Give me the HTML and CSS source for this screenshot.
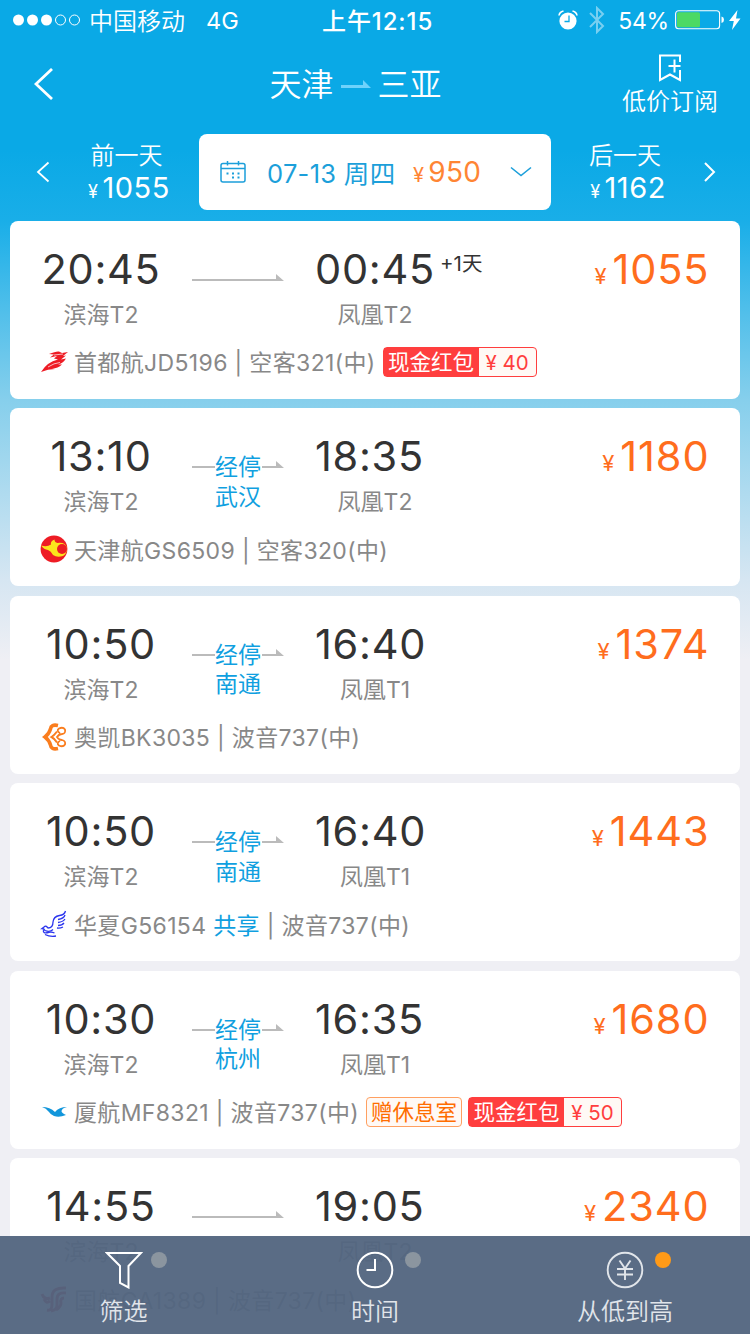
FILE: index.html
```html
<!DOCTYPE html>
<html lang="zh-CN">
<head>
    <meta charset="UTF-8">
    <meta name="viewport" content="width=device-width, initial-scale=1.0">
    <title>天津 - 三亚</title>
    <link rel="stylesheet" href="styles.css">
</head>
<body>

<svg width="0" height="0" class="defs">
    <symbol id="arrow" viewBox="0 0 92 8"><path d="M0 5h84V0l8 7H0z"/></symbol>
    <symbol id="arrow-stop" viewBox="0 0 92 8"><path d="M0 5h23v2H0zM70 5h14V0l8 7H70z"/></symbol>
</svg>

<div class="screen">
    <div class="status">
        <svg class="signal" width="68" height="12" viewBox="0 0 68 12">
            <g fill="#fff"><circle cx="5.5" cy="6" r="5.5"/><circle cx="19.5" cy="6" r="5.5"/><circle cx="33.5" cy="6" r="5.5"/></g>
            <g fill="none" stroke="#fff"><circle cx="47.5" cy="6" r="5"/><circle cx="61.5" cy="6" r="5"/></g>
        </svg>
        <span class="carrier">中国移动</span>
        <span class="network">4G</span>
        <span class="clock">上午12:15</span>
        <div class="status-right">
            <svg width="20" height="20" viewBox="0 0 20 20">
                <circle cx="10" cy="11" r="8.6" fill="#fff"/>
                <path d="M1 5.5Q1.5 2 5.5 1M19 5.500Q18.500 2 14.500 1" fill="none" stroke="#fff" stroke-width="1.6"/>
                <path d="M11 5.500v6H6.500" fill="none" stroke="#0aa9e6" stroke-width="1.3"/>
            </svg>
            <svg class="bluetooth" width="16" height="28" viewBox="0 0 16 28">
                <path d="M1 7l13 13-6 6V2l6 6L1 21" fill="none" stroke="#fff" stroke-width="2"/>
            </svg>
            <span class="percent">54%</span>
            <svg class="battery" width="50" height="20" viewBox="0 0 50 20">
                <rect x=".6" y=".8" width="44" height="18" rx="3" fill="none" stroke="#fff" stroke-width="1.1"/>
                <rect x="2" y="2.300" width="23" height="15" rx="1.500" fill="#4cd964"/>
                <path d="M46.500 6.500q2.500.5 2.500 3.300t-2.500 3.300z" fill="#fff"/>
            </svg>
            <svg width="12" height="20" viewBox="0 0 12 20"><path d="M8.500 0L0 11h4.800L3 20l8.500-11.500H7z" fill="#fff"/></svg>
        </div>
    </div>

    <div class="navbar">
        <svg class="back" width="20" height="32" viewBox="0 0 20 32"><path d="M18 1L2 16l16 15" fill="none" stroke="#fff" stroke-width="2.800"/></svg>
        <div class="route">
            <span>天津</span>
            <svg width="30" height="8" viewBox="0 0 30 8"><path d="M0 5h22V0l8 8H0z" fill="#6fd2fb"/></svg>
            <span>三亚</span>
        </div>
        <div class="subscribe">
            <svg width="24" height="28" viewBox="0 0 24 28" fill="none" stroke="#fff" stroke-width="2">
                <path d="M22 8V1.500H2V26l10-5.500L22 26V16M16.500 5.500v13M10.500 12h12"/>
            </svg>
            <span>低价订阅</span>
        </div>
    </div>

    <div class="days">
        <svg class="prev-arrow" width="14" height="22" viewBox="0 0 14 22"><path d="M12.500 1.500L2 11l10.500 9.500" fill="none" stroke="#fff" stroke-width="1.800"/></svg>
        <div class="day prev">
            <span>前一天</span>
            <span class="day-price"><i>¥</i>1055</span>
        </div>
        <div class="today">
            <svg class="calendar" width="26" height="22" viewBox="0 0 26 22" fill="none" stroke="#1c9fda" stroke-width="1.500">
                <rect x="1" y="2.500" width="24" height="18.500" rx="2"/>
                <path d="M1 7.500h24M7.500 0v4.500M18.500 0v4.500"/>
                <path d="M6.500 12.500h2M12 12.500h2M17.500 12.500h2M12 16.500h2M17.500 16.500h2" stroke-width="2"/>
            </svg>
            <span class="date">07-13 周四</span>
            <span class="low"><i>¥</i>950</span>
            <svg class="down" width="22" height="12" viewBox="0 0 22 12"><path d="M1 1.500l10 8 10-8" fill="none" stroke="#1c9fda" stroke-width="1.600"/></svg>
        </div>
        <div class="day next">
            <span>后一天</span>
            <span class="day-price"><i>¥</i>1162</span>
        </div>
        <svg class="next-arrow" width="14" height="22" viewBox="0 0 14 22"><path d="M2 2l9 9-9 9" fill="none" stroke="#fff" stroke-width="2"/></svg>
    </div>

    <div class="list">
        <div class="card">
            <div class="times">
                <div class="depart"><b>20:45</b><span>滨海T2</span></div>
                <div class="via"><svg width="92" height="8"><use href="#arrow"/></svg></div>
                <div class="arrive"><b>00:45</b><span>凤凰T2</span></div>
                <sup>+1天</sup>
                <div class="price"><i>¥</i>1055</div>
            </div>
            <div class="info">
                <svg class="logo" width="28" height="24" viewBox="0 0 28 24" fill="#ee1c25">
                    <path d="M1 22Q7 12 18 9.500l-4-1 3-2.500-7 1.500 4-3-5-.5Q16 1 19 1.500l3 1.500 6-1-5 4 3-.5-5 4 5-1q-3 5-8 6l4 0q-4 4-10 4l3 .5Q8 19 1 22z"/>
                    <path d="M8 17q6-4 12-4.500M14 5l9-1" fill="none" stroke="#fff" stroke-width=".7"/>
                </svg>
                <span>首都航JD5196 | 空客321(中)</span>
                <span class="cash"><em>现金红包</em><strong>¥ 40</strong></span>
            </div>
        </div>

        <div class="card">
            <div class="times">
                <div class="depart"><b>13:10</b><span>滨海T2</span></div>
                <div class="via"><svg width="92" height="8"><use href="#arrow-stop"/></svg><span>经停<br>武汉</span></div>
                <div class="arrive"><b>18:35</b><span>凤凰T2</span></div>
                <div class="price"><i>¥</i>1180</div>
            </div>
            <div class="info">
                <svg class="logo" width="28" height="28" viewBox="0 0 28 28">
                    <circle cx="14" cy="14" r="13.400" fill="#ee1c25"/>
                    <path d="M1 10.500q6 2 10-1-1-3 3.500-5 0 3 3 3.500 8-1 9.500 5 0 6-4 8-6 2-10-1-2-4-5-5Q4 14.500 1 10.500z" fill="#fbe41c"/>
                    <circle cx="22" cy="14" r="5" fill="#ee1c25"/>
                </svg>
                <span>天津航GS6509 | 空客320(中)</span>
            </div>
        </div>

        <div class="card">
            <div class="times">
                <div class="depart"><b>10:50</b><span>滨海T2</span></div>
                <div class="via"><svg width="92" height="8"><use href="#arrow-stop"/></svg><span>经停<br>南通</span></div>
                <div class="arrive"><b>16:40</b><span>凤凰T1</span></div>
                <div class="price"><i>¥</i>1374</div>
            </div>
            <div class="info">
                <svg class="logo" width="28" height="28" viewBox="0 0 28 28" fill="none" stroke="#fa7d1e">
                    <path d="M18 2.500Q11 1 10.500 6 9 11 5 14q4 3 5.500 8 .5 5 7.500 3.500" stroke-width="3.600"/>
                    <path d="M17 8.500q-3 4-5.500 5.500 3 1.500 5.500 5.500" stroke-width="2"/>
                    <path d="M20 10q-4-2-1-4.500 4-2 6 1 1 4-3 4.500-3 0-5 3 2 3 5 3 4 1 3 4.500-2 3-6 1-3-2.500 1-4.500" stroke-width="1.800"/>
                </svg>
                <span>奥凯BK3035 | 波音737(中)</span>
            </div>
        </div>

        <div class="card">
            <div class="times">
                <div class="depart"><b>10:50</b><span>滨海T2</span></div>
                <div class="via"><svg width="92" height="8"><use href="#arrow-stop"/></svg><span>经停<br>南通</span></div>
                <div class="arrive"><b>16:40</b><span>凤凰T1</span></div>
                <div class="price"><i>¥</i>1443</div>
            </div>
            <div class="info">
                <svg class="logo" width="28" height="28" viewBox="0 0 28 28" fill="none" stroke="#2b35ee" stroke-width="1.300">
                    <path d="M25.500 1q-1 4-6 4.500-6 1-6.500 6.500 0 6-5 6-2-3-4-1l-2 1.500q2 0 3 2 5 2 8-1"/>
                    <path d="M25 5q-1 3.500-7 4.500M25 9q-2 3-7 3.500M24 13q-2 2.500-6 2.500M23 17q-3 1.500-6 1M3.500 20q-1 4 5 2.500 3-1 6 .5M5 24.500q5 2.500 11 1.500"/>
                </svg>
                <span>华夏G56154 <a>共享</a> | 波音737(中)</span>
            </div>
        </div>

        <div class="card">
            <div class="times">
                <div class="depart"><b>10:30</b><span>滨海T2</span></div>
                <div class="via"><svg width="92" height="8"><use href="#arrow-stop"/></svg><span>经停<br>杭州</span></div>
                <div class="arrive"><b>16:35</b><span>凤凰T1</span></div>
                <div class="price"><i>¥</i>1680</div>
            </div>
            <div class="info">
                <svg class="logo" width="28" height="28" viewBox="0 0 28 28">
                    <path d="M2 9q8 0 13 5 4-5 12-5-5 1-5.500 4 0 2 4.500 4-7 3-12 1-4-2-5-4-3-4-7-5z" fill="#1296db"/>
                </svg>
                <span>厦航MF8321 | 波音737(中)</span>
                <span class="lounge">赠休息室</span>
                <span class="cash"><em>现金红包</em><strong>¥ 50</strong></span>
            </div>
        </div>

        <div class="card">
            <div class="times">
                <div class="depart"><b>14:55</b><span>滨海T2</span></div>
                <div class="via"><svg width="92" height="8"><use href="#arrow"/></svg></div>
                <div class="arrive"><b>19:05</b><span>凤凰T2</span></div>
                <div class="price"><i>¥</i>2340</div>
            </div>
            <div class="info">
                <svg class="logo" width="28" height="28" viewBox="0 0 28 28" fill="none" stroke="#d0121b" stroke-width="3">
                    <path d="M2 9q2 6 8 4M4 14q2 5 6 2M26 3Q12 2 12 12v8q0 6-5 5M26 8q-9-1-9 6v6q0 5-6 6M24 13q-4 0-3 5 0 4-5 7"/>
                </svg>
                <span>国航CA1389 | 波音737(中)</span>
            </div>
        </div>
    </div>

    <div class="tabbar">
        <div class="tab filter">
            <svg width="38" height="38" viewBox="0 0 38 38" fill="none" stroke="#fff" stroke-width="2"><path d="M2 2h34L23.500 15v21.500L15 32V15z"/></svg>
            <span>筛选</span>
            <u class="dot"></u>
        </div>
        <div class="tab">
            <svg width="38" height="38" viewBox="0 0 38 38" fill="none" stroke="#fff" stroke-width="2"><circle cx="19" cy="19" r="17.300"/><path d="M19 8v11h-8.500"/></svg>
            <span>时间</span>
            <u class="dot"></u>
        </div>
        <div class="tab">
            <svg width="38" height="38" viewBox="0 0 38 38" fill="none" stroke="#e1e5ea" stroke-width="1.900"><circle cx="19" cy="19" r="17.300"/><path d="M13.500 9.500l5.500 8 5.500-8M19 17v12M11 18h16M11 23.500h16"/></svg>
            <span>从低到高</span>
            <u class="dot active"></u>
        </div>
    </div>
</div>

</body>
</html>
```
FILE: styles.css
```css
* {
    box-sizing: border-box;
}
body {
    margin: 0;
    font-family: Inter, "Noto Sans CJK SC", sans-serif;
    font-weight: 400;
    color: #fff;
}
i, em {
    font-style: normal;
}
.defs {
    position: absolute;
}
svg {
    display: block;
    flex-shrink: 0;
}
.screen {
    position: relative;
    width: 750px;
    height: 1334px;
    overflow: hidden;
    background: linear-gradient(#0aa9e6 0, #0aa9e6 150px, #19aee8 220px, #86cfec 400px, #d6e6f2 580px, #efeff4 660px);
}

.status {
    display: flex;
    align-items: center;
    height: 40px;
    padding: 0 9px 0 13px;
    font-size: 24px;
    line-height: 30px;
    white-space: nowrap;
}
.carrier {
    width: 96px;
    margin: 3px 0 0 8px;
    font-weight: 350;
}
.network {
    width: 116px;
    margin: 2px 0 0 21px;
    font-size: 23.5px;
}
.clock {
    margin-top: 3px;
    font-weight: 500;
    letter-spacing: .9px;
}
.status-right {
    display: flex;
    align-items: center;
    margin-left: auto;
}
.percent {
    margin-top: 2px;
    font-size: 23px;
    letter-spacing: -.2px;
}
.bluetooth {
    margin: 0 13px 0 11px;
    opacity: .45;
}
.battery {
    margin: 0 4px 0 6px;
}

.navbar {
    display: grid;
    grid-template-columns: 160px 1fr 160px;
    align-items: center;
    height: 88px;
}
.back {
    margin-left: 34px;
}
.route {
    display: flex;
    align-items: center;
    justify-content: center;
    gap: 7px;
    padding: 0 39px 4px 0;
    font-size: 32px;
    font-weight: 350;
}
.route svg {
    margin-top: 4px;
}
.subscribe {
    display: flex;
    flex-direction: column;
    align-items: center;
    padding-top: 4px;
    font-size: 24px;
    font-weight: 350;
    line-height: 34px;
}
.subscribe span {
    margin-top: 3px;
}

.days {
    display: flex;
    align-items: center;
    height: 92.7px;
    padding: 0 33px 5px 36px;
}
.day {
    display: flex;
    flex-direction: column;
    align-items: center;
    width: 100px;
    padding-top: 4px;
    font-size: 24px;
    font-weight: 350;
    line-height: 32px;
}
.prev {
    margin: 0 20px 0 29px;
}
.prev > span:first-child {
    margin-left: -5px;
}
.next > span:first-child {
    margin-left: -6px;
}
.next {
    margin: 0 25px 0 27px;
}
.day-price {
    font-size: 29px;
    font-weight: 400;
    letter-spacing: .5px;
}
.day-price i {
    margin-right: 4px;
    font-size: 18px;
}
.today {
    display: flex;
    align-items: center;
    width: 352px;
    height: 76px;
    padding: 0 19px 0 21px;
    border-radius: 8px;
    background: #fff;
    color: #1c9fda;
}
.date {
    width: 130px;
    margin: -1px 0 0 21px;
    font-size: 25.5px;
    letter-spacing: .3px;
    white-space: nowrap;
}
.low {
    margin-left: 16px;
    color: #ff8534;
    font-size: 28px;
    letter-spacing: .3px;
}
.low i {
    margin-right: 4px;
    font-size: 20px;
}
.down {
    margin-left: auto;
}

.list {
    display: grid;
    gap: 9.5px;
    padding: 0 10.5px 0 10px;
}
.card {
    height: 178px;
    padding: 23px 31px 0;
    border-radius: 8px;
    background: #fff;
    color: #888;
    font-size: 23px;
}
.times {
    display: flex;
    height: 102px;
}
.times b {
    color: #333;
    font-size: 41.5px;
    font-weight: 400;
    letter-spacing: .7px;
    line-height: 50px;
}
.depart, .arrive {
    display: flex;
    flex-direction: column;
    align-items: center;
    width: 120px;
}
.depart span, .arrive span {
    line-height: 42px;
}
.arrive b {
    align-self: flex-start;
}
.via {
    width: 92px;
    margin: 30px 31px 0 31px;
    fill: #bbb;
}
.via span {
    display: block;
    margin-top: -16px;
    color: #109fe0;
    line-height: 29.5px;
    text-align: center;
}
.times sup {
    margin-left: 5px;
    color: #333;
    font-size: 20.5px;
    line-height: 40px;
}
.price {
    margin: 0 -1px 0 auto;
    color: #ff6d1d;
    font-size: 41.5px;
    letter-spacing: .9px;
    line-height: 50px;
}
.price i {
    margin-right: 5px;
    font-size: 22px;
}
.info {
    display: flex;
    align-items: center;
    height: 32px;
    line-height: 32px;
    white-space: nowrap;
}
.info > span {
    letter-spacing: .35px;
}
.logo {
    margin: 0 6px 0 -1px;
}
.logo + span {
    padding-top: 3px;
}
.info a {
    color: #109fe0;
}
.info .cash, .info .lounge {
    display: flex;
    height: 30px;
    margin-left: 7px;
    border: 1px solid #ff3e3e;
    border-radius: 4px;
    background: #fff9f5;
    color: #ff3e3e;
    font-size: 21.5px;
    letter-spacing: 0;
    line-height: 29px;
}
.cash em {
    width: 95px;
    background: #ff3e3e;
    color: #fff;
    text-align: center;
}
.cash strong {
    width: 57px;
    font-size: 20.5px;
    font-weight: 400;
    text-align: center;
}
.info .lounge {
    justify-content: center;
    width: 96px;
    border-color: #ffa061;
    color: #ff6d00;
}
.info .lounge + .cash {
    margin-left: 6px;
}

.tabbar {
    position: absolute;
    left: 0;
    bottom: 0;
    display: grid;
    grid-template-columns: 1fr 1fr 1fr;
    width: 750px;
    height: 98px;
    background: rgba(83, 101, 127, .955);
}
.tab {
    position: relative;
    display: flex;
    flex-direction: column;
    align-items: center;
    padding-top: 15px;
    color: #e1e5ea;
    font-size: 24px;
    font-weight: 350;
    line-height: 45px;
}
.filter {
    padding-right: 3px;
}
.dot {
    position: absolute;
    top: 16px;
    left: 155px;
    width: 16px;
    height: 16px;
    border-radius: 50%;
    background: #8b959f;
}
.filter .dot {
    left: 151px;
}
.dot.active {
    background: #ff9a17;
}
```
